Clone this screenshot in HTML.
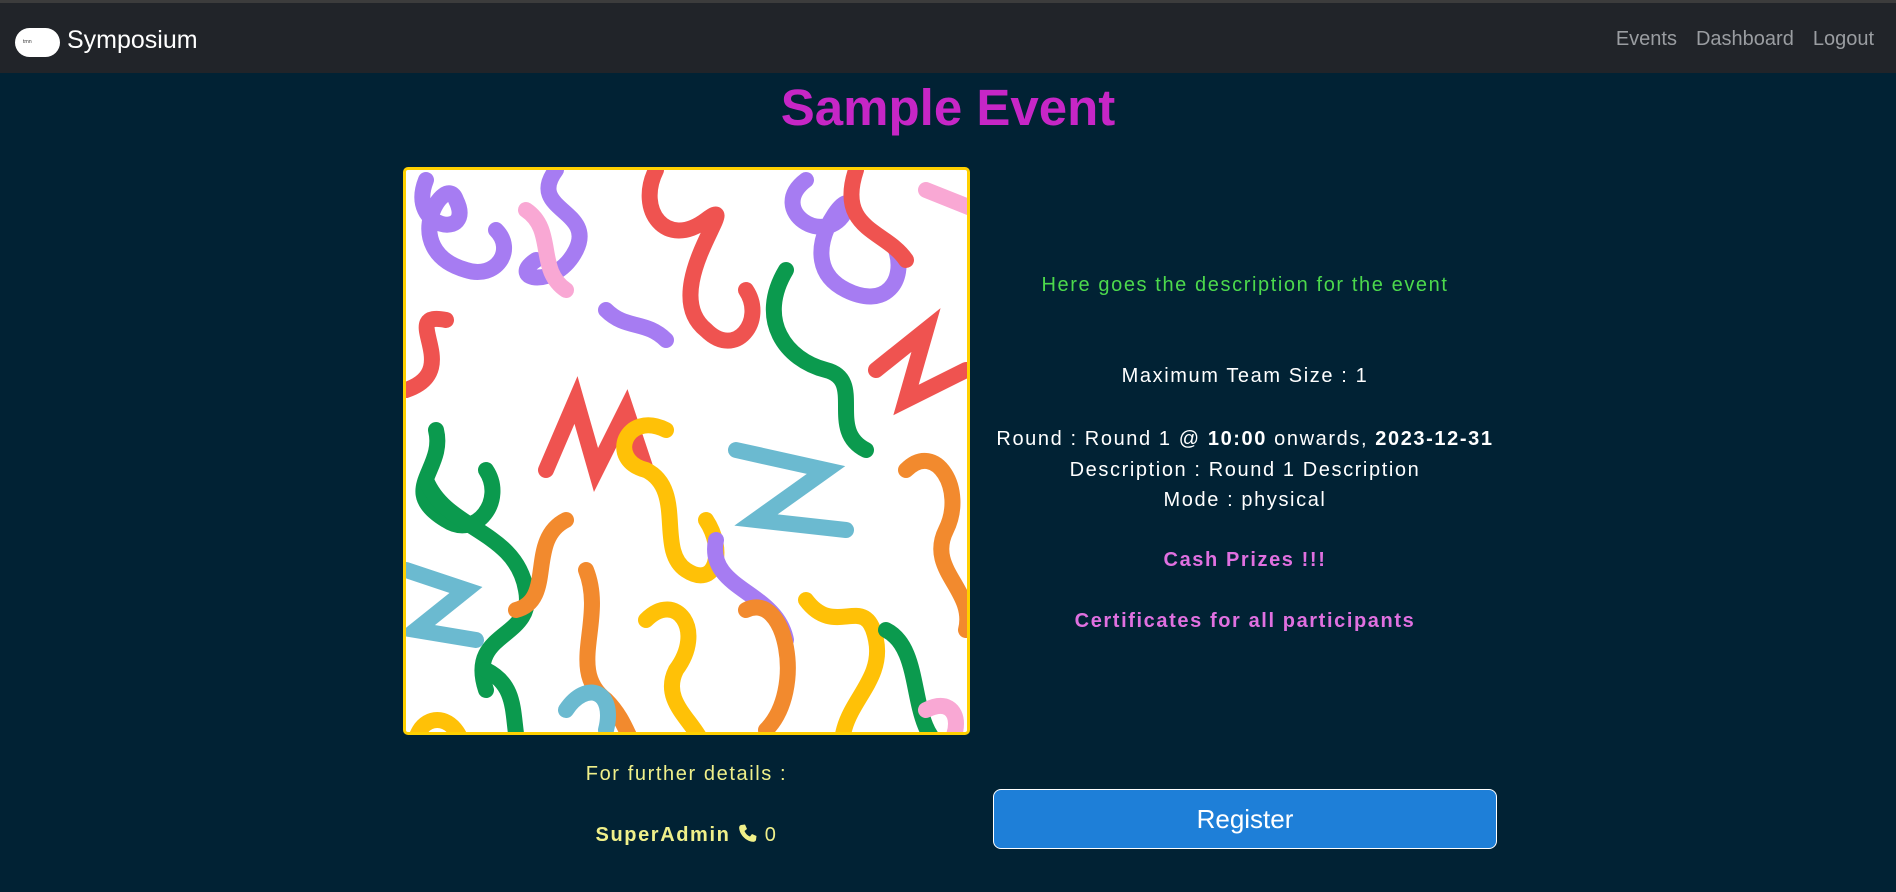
<!DOCTYPE html>
<html><head><meta charset="utf-8"><style>
*{margin:0;padding:0;box-sizing:border-box}
body{width:1896px;height:892px;background:#012234;font-family:"Liberation Sans",sans-serif;overflow:hidden;position:relative}
.top{position:absolute;left:0;top:0;width:1896px;height:3px;background:#3c3c3c}
nav{position:absolute;left:0;top:3px;width:1896px;height:70px;background:#212429}
.pill{position:absolute;left:15px;top:25px;width:45px;height:29px;background:#fff;border-radius:15px;font-size:5px;color:#333;line-height:29px;padding-left:8px}
.brand{position:absolute;left:67px;top:23px;font-size:25px;color:#fff}
.links{position:absolute;right:22px;top:25px;font-size:20px;color:#9a9da1}
.links span{margin-left:19px}
h1{position:absolute;left:0;width:1896px;top:78px;text-align:center;font-size:51px;color:#c626c6;font-weight:bold}
.img{position:absolute;left:403px;top:167px;width:567px;height:568px;border:3px solid #ffd000;border-radius:5px;background:#fff;overflow:hidden}
.c{position:absolute;text-align:center;letter-spacing:1.6px;font-size:20px}
.r{left:993px;width:504px}
.l{left:403px;width:567px}
.btn{position:absolute;left:993px;top:789px;width:504px;height:60px;background:#1e7fd8;border:1px solid #fff;border-radius:8px;color:#fff;font-size:26px;text-align:center;line-height:58px}
</style></head><body>
<div class="top"></div>
<nav><div class="pill">trnn</div><div class="brand">Symposium</div>
<div class="links"><span>Events</span><span>Dashboard</span><span>Logout</span></div></nav>
<h1>Sample Event</h1>
<div class="img"><svg width="567" height="568" viewBox="0 0 567 568" fill="none" stroke-linecap="round" stroke-width="16">
<path d="M20 10 C0 60 70 70 50 30 C40 0 -10 80 60 100 C90 110 110 80 90 60" stroke="#a67cf2"/>
<path d="M150 0 C120 40 190 40 170 80 C150 120 100 110 130 90" stroke="#a67cf2"/>
<path d="M40 150 C-10 140 60 200 0 220" stroke="#ef5350"/>
<path d="M30 260 C40 300 -10 320 40 350 C70 370 100 330 80 300" stroke="#0b9a4e"/>
<path d="M20 310 C40 360 110 360 120 420 C130 470 60 460 80 520" stroke="#0b9a4e"/>
<path d="M0 400 L60 420 L10 460 L70 470" stroke="#6bbad0"/>
<path d="M10 590 C0 540 60 530 60 600" stroke="#ffc107"/>
<path d="M80 500 C120 520 100 560 120 600" stroke="#0b9a4e"/>
<path d="M140 300 L170 230 L190 300 L220 240 L240 300" stroke="#ef5350"/>
<path d="M250 0 C230 40 260 80 300 50 C340 20 250 120 300 160 C330 190 360 150 340 120" stroke="#ef5350"/>
<path d="M260 260 C220 240 200 290 240 300 C280 320 250 380 280 400 C310 420 320 380 300 350" stroke="#ffc107"/>
<path d="M160 350 C120 370 150 430 110 440" stroke="#f28a2e"/>
<path d="M180 400 C200 450 160 500 200 530 C230 560 220 590 260 600" stroke="#f28a2e"/>
<path d="M240 450 C270 420 300 460 270 500 C250 540 310 560 300 600" stroke="#ffc107"/>
<path d="M330 280 L420 300 L350 350 L440 360" stroke="#6bbad0"/>
<path d="M310 370 C300 420 370 420 380 470" stroke="#a67cf2"/>
<path d="M340 440 C380 420 400 520 360 560" stroke="#f28a2e"/>
<path d="M400 430 C430 470 460 420 470 470 C480 520 420 540 440 600" stroke="#ffc107"/>
<path d="M380 100 C350 150 380 190 420 200 C460 210 420 260 460 280" stroke="#0b9a4e"/>
<path d="M400 10 C360 40 420 80 440 40 C450 10 380 90 440 120 C480 140 500 110 490 80" stroke="#a67cf2"/>
<path d="M450 0 C430 60 480 60 500 90" stroke="#ef5350"/>
<path d="M520 20 L570 40" stroke="#f9a8d4"/>
<path d="M470 200 L520 160 L500 230 L560 200" stroke="#ef5350"/>
<path d="M500 300 C530 270 560 320 540 360 C520 400 570 420 560 460" stroke="#f28a2e"/>
<path d="M480 460 C520 480 500 560 540 580" stroke="#0b9a4e"/>
<path d="M120 40 C150 60 130 100 160 120" stroke="#f9a8d4"/>
<path d="M200 140 C220 160 240 150 260 170" stroke="#a67cf2"/>
<path d="M160 540 C180 510 210 520 200 560" stroke="#6bbad0"/>
<path d="M520 540 C560 520 560 580 520 590" stroke="#f9a8d4"/>
</svg></div>
<div class="c r" style="top:274px;color:#4cd94c">Here goes the description for the event</div>
<div class="c r" style="top:365px;color:#fff">Maximum Team Size : 1</div>
<div class="c r" style="top:424px;color:#fff;line-height:30.5px">Round : Round 1 @ <b>10:00</b> onwards, <b>2023-12-31</b><br>Description : Round 1 Description<br>Mode : physical</div>
<div class="c r" style="top:549px;color:#e070e0;font-weight:bold">Cash Prizes !!!</div>
<div class="c r" style="top:610px;color:#e070e0;font-weight:bold">Certificates for all participants</div>
<div class="btn">Register</div>
<div class="c l" style="top:763px;color:#f0f08a">For further details :</div>
<div class="c l" style="top:823px;color:#f0f08a"><b>SuperAdmin</b> <svg width="20" height="20" viewBox="0 0 20 20" style="vertical-align:-2px"><path d="M3 2 L7 1.5 L9 6 L6.5 8 C7.5 10.5 9.5 12.5 12 13.5 L14 11 L18.5 13 L18 17 C17.5 18.5 16 19 14.5 18.8 C8 18 2 12 1.2 5.5 C1 4 1.5 2.5 3 2 Z" fill="#f0f08a"/></svg> 0</div>
</body></html>
